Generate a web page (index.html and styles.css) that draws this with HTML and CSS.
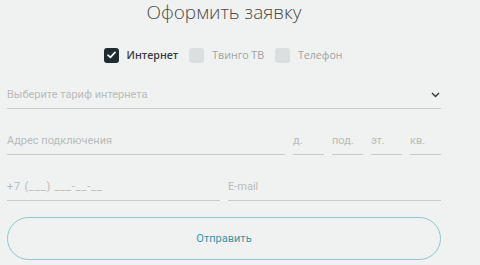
FILE: index.html
```html
<!DOCTYPE html>
<html lang="ru">
<head>
<meta charset="utf-8"/>
<title>Оформить заявку</title>
<link rel="stylesheet" href="styles.css">
</head>
<body>
<div class="order">
  <h1>Оформить заявку</h1>

  <div class="services">
    <label class="check on"><span class="box">
      <svg width="9" height="8" viewBox="0 0 9 8"><path d="M1 4.2 L3.4 6.4 L8 1.4" stroke="#fff" stroke-width="1.6" fill="none" stroke-linecap="round" stroke-linejoin="round"/></svg>
    </span>Интернет</label>
    <label class="check"><span class="box"></span>Твинго ТВ</label>
    <label class="check"><span class="box"></span>Телефон</label>
  </div>

  <div class="row first">
    <div class="field select">
      <span>Выберите тариф интернета</span>
      <svg width="9" height="6" viewBox="0 0 9 6"><path d="M1 1 L4.5 4.5 L8 1" stroke="#333" stroke-width="1.4" fill="none"/></svg>
    </div>
  </div>

  <div class="row">
    <div class="field grow">Адрес подключения</div>
    <div class="field small">д.</div>
    <div class="field small">под.</div>
    <div class="field small">эт.</div>
    <div class="field small">кв.</div>
  </div>

  <div class="row">
    <div class="field half phone">+7 (___) ___-__-__</div>
    <div class="field half">E-mail</div>
  </div>

  <button type="button" class="send">Отправить</button>
</div>
</body>
</html>
```

FILE: styles.css
```css
*{margin:0;padding:0;box-sizing:border-box;}
body{background:#f0f2f1;font-family:Roboto,Arial,sans-serif;}
.order{width:434px;margin-left:7px;display:flex;flex-direction:column;}
.order h1{font-family:"Open Sans",sans-serif;font-weight:300;font-size:19px;color:#4a4a4a;text-align:center;line-height:24px;}
.services{display:flex;justify-content:center;align-items:center;gap:11px;margin-top:23px;height:16px;padding-right:2px;}
.check{display:flex;align-items:center;gap:8px;font-family:"Open Sans",sans-serif;font-size:10.6px;color:#a0a3a4;}
.check.on{color:#3a3d3f;font-weight:600;}
.box{width:15px;height:15px;border-radius:3px;background:#dcdfe0;display:flex;align-items:center;justify-content:center;}
.check.on .box{background:#1f2b31;}
.row{display:flex;gap:8px;margin-top:16px;}
.row.first{margin-top:16px;}
.field{height:30px;border-bottom:1px solid #c9cccb;font-size:11px;color:#b9bcbb;display:flex;align-items:center;padding-top:2px;}
.select{flex:1;justify-content:space-between;padding-right:1px;}
.grow{flex:1;}
.small{width:31px;}
.half{flex:1;}
.phone{letter-spacing:.8px;}
.send{margin-top:16px;height:43px;border:1px solid #8fc6cd;border-radius:22px;background:transparent;font-family:Roboto,Arial,sans-serif;font-size:11px;color:#3b97a6;cursor:pointer;}
```
